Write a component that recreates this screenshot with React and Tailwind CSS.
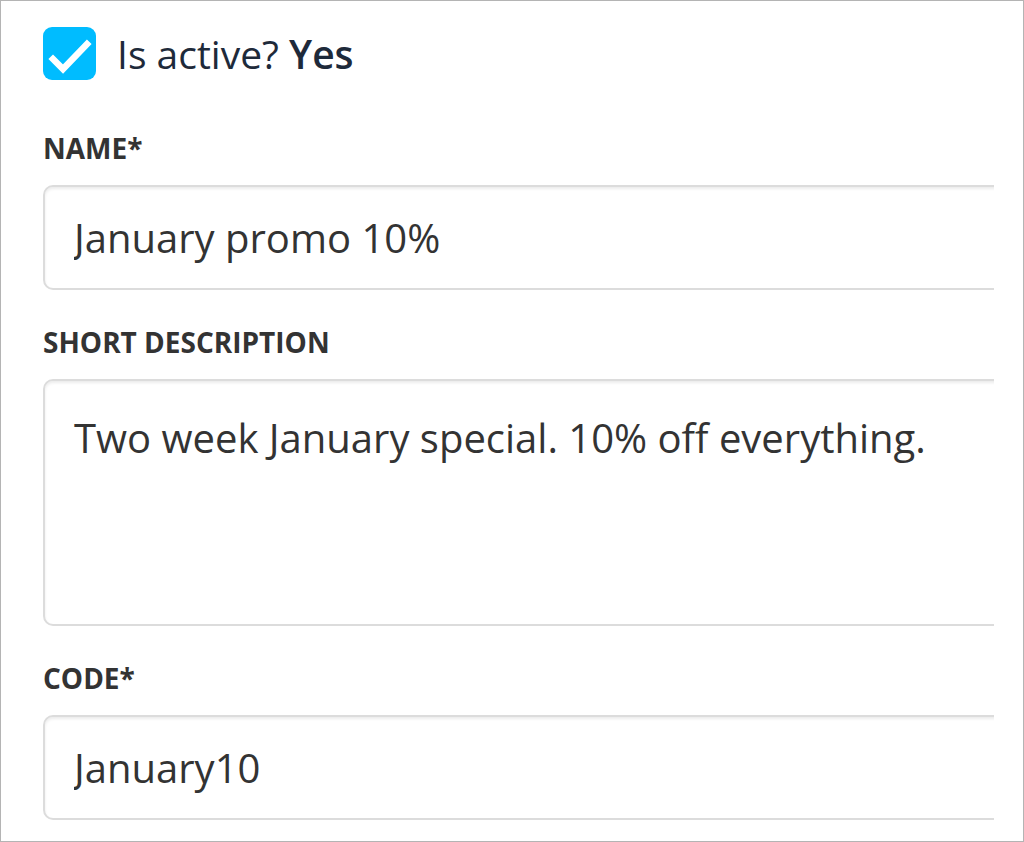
import React from "react";

// Discount edit form: active toggle + name / description / code fields
function Field({ label, children }) {
  return (
    <div className="flex flex-col">
      <label className="text-[28px] leading-[34px] font-bold uppercase text-[#333333]">{label}</label>
      <div className="mt-[20px] w-[951px] overflow-hidden">{children}</div>
    </div>
  );
}

export default function App() {
  const inputClass =
    "w-[1000px] rounded-[10px] border-2 border-[#dcdcdc] bg-white pl-[29px] text-[40px] text-[#333333] shadow-[inset_0_2px_3px_rgba(0,0,0,0.08)] outline-none";

  return (
    <div
      className="h-[842px] w-[1024px] overflow-hidden border border-[#b4b4b4] bg-white"
      style={{ fontFamily: '"Open Sans", "Noto Sans", sans-serif' }}
    >
      <div className="flex flex-col pl-[42px] pt-[26px]">
        {/* Active checkbox */}
        <div className="flex items-center gap-[21px]">
          <div className="flex h-[53px] w-[53px] items-center justify-center rounded-[9px] bg-[#00bcff]">
            <svg width="53" height="53" viewBox="0 0 53 53">
              <polyline points="10,32 20,42 44,17" fill="none" stroke="white" strokeWidth="6.5" strokeLinecap="square" />
            </svg>
          </div>
          <span className="text-[39px] leading-[53px] text-[#1e2a3a]">
            Is active? <span className="font-semibold">Yes</span>
          </span>
        </div>

        <div className="mt-[51px] flex flex-col gap-[35px]">
          <Field label="Name*">
            <input className={`${inputClass} h-[105px]`} defaultValue="January promo 10%" />
          </Field>
          <Field label="Short description">
            <textarea
              className={`${inputClass} block h-[247px] resize-none pt-[32px] leading-[50px]`}
              defaultValue="Two week January special. 10% off everything."
            />
          </Field>
          <Field label="Code*">
            <input className={`${inputClass} h-[105px]`} defaultValue="January10" />
          </Field>
        </div>
      </div>
    </div>
  );
}
